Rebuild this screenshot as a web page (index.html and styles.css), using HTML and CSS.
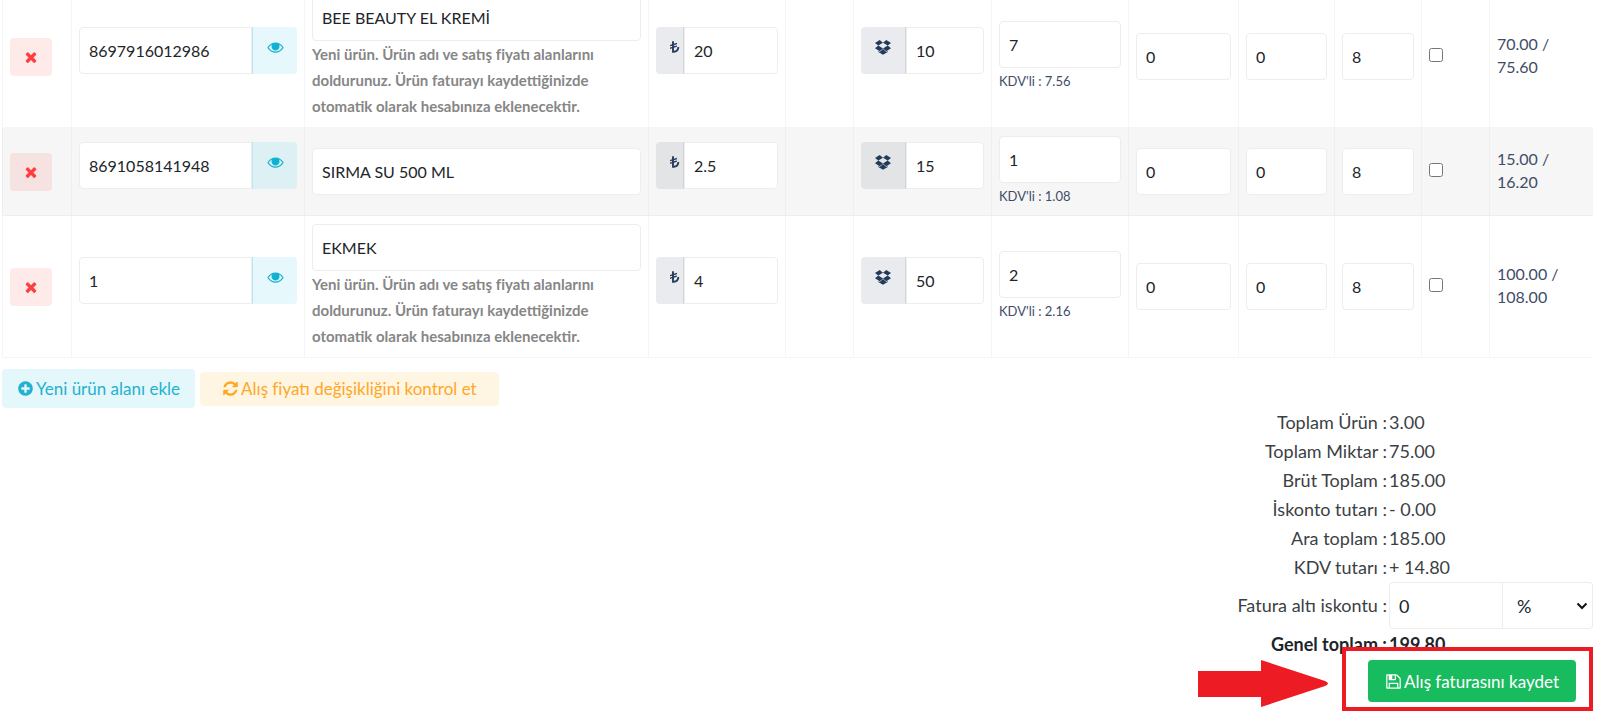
FILE: index.html
```html
<!DOCTYPE html>
<html lang="tr">
<head>
	<meta charset="UTF-8">
	<title>Alış faturası</title>
	<link rel="stylesheet" href="styles.css">
</head>
<body>
	<!-- icons -->
	<svg class="sprite" aria-hidden="true">
		<symbol id="times" viewBox="0 0 1792 1792"><path d="M1490 1322q0 40-28 68l-136 136q-28 28-68 28t-68-28l-294-294-294 294q-28 28-68 28t-68-28l-136-136q-28-28-28-68t28-68l294-294-294-294q-28-28-28-68t28-68l136-136q28-28 68-28t68 28l294 294 294-294q28-28 68-28t68 28l136 136q28 28 28 68t-28 68l-294 294 294 294q28 28 28 68z"/></symbol>
		<symbol id="eye" viewBox="0 0 1792 1792"><path d="M1664 960q-152-236-381-353 61 104 61 225 0 185-131.5 316.5t-316.5 131.5-316.5-131.5-131.5-316.5q0-121 61-225-229 117-381 353 133 205 333.5 326.5t434.5 121.5 434.5-121.5 333.5-326.5zm-720-384q0-20-14-34t-34-14q-125 0-214.5 89.5t-89.5 214.5q0 20 14 34t34 14 34-14 14-34q0-86 61-147t147-61q20 0 34-14t14-34zm848 384q0 34-20 69-140 230-376.5 368.5t-499.5 138.5-499.5-139-376.5-368q-20-35-20-69t20-69q140-229 376.5-368t499.5-139 499.5 139 376.5 368q20 35 20 69z"/><circle cx="896" cy="832" r="330"/></symbol>
		<symbol id="plus" viewBox="0 0 1792 1792"><path d="M1344 960v-128q0-26-19-45t-45-19h-256v-256q0-26-19-45t-45-19h-128q-26 0-45 19t-19 45v256h-256q-26 0-45 19t-19 45v128q0 26 19 45t45 19h256v256q0 26 19 45t45 19h128q26 0 45-19t19-45v-256h256q26 0 45-19t19-45zm320-64q0 209-103 385.5t-279.5 279.5-385.5 103-385.5-103-279.5-279.5-103-385.5 103-385.5 279.5-279.5 385.5-103 385.5 103 279.5 279.5 103 385.5z"/></symbol>
		<symbol id="refresh" viewBox="0 0 1792 1792"><path d="M1639 1056q0 5-1 7-64 268-268 434.5t-478 166.5q-146 0-282.5-55t-243.5-157l-129 129q-19 19-45 19t-45-19-19-45v-448q0-26 19-45t45-19h448q26 0 45 19t19 45-19 45l-137 137q71 66 161 102t187 36q134 0 250-65t186-179q11-17 53-117 8-23 30-23h192q13 0 22.5 9.5t9.5 22.5zm25-800v448q0 26-19 45t-45 19h-448q-26 0-45-19t-19-45 19-45l138-138q-148-137-349-137-134 0-250 65t-186 179q-11 17-53 117-8 23-30 23h-199q-13 0-22.5-9.5t-9.5-22.5v-7q65-268 270-434.5t480-166.5q146 0 284 55.5t245 156.5l130-129q19-19 45-19t45 19 19 45z"/></symbol>
		<symbol id="floppy" viewBox="0 0 1792 1792"><path d="M512 1536h768v-384h-768v384zm896 0h128v-896q0-14-10-38.5t-20-34.5l-281-281q-10-10-34-20t-39-10v416q0 40-28 68t-68 28h-576q-40 0-68-28t-28-68v-416h-128v1280h128v-416q0-40 28-68t68-28h832q40 0 68 28t28 68v416zm-384-928v-320q0-13-9.5-22.5t-22.5-9.5h-192q-13 0-22.5 9.5t-9.5 22.5v320q0 13 9.5 22.5t22.5 9.5h192q13 0 22.5-9.5t9.5-22.5zm640 32v928q0 40-28 68t-68 28h-1344q-40 0-68-28t-28-68v-1344q0-40 28-68t68-28h928q40 0 88 20t76 48l280 280q28 28 48 76t20 88z"/></symbol>
		<symbol id="dropbox" viewBox="0 0 16 16"><path d="M4.7 1 8 3.7 3.3 6.6 0 4zM11.3 1 8 3.7l4.7 2.9L16 4zM0 9.3l3.3-2.7L8 9.5l-3.3 2.8zM16 9.3l-3.3-2.7L8 9.5l3.3 2.8zM8 10.1l3.3 2.8 1.4-.9v1L8 15.8 3.3 13v-1l1.4.9z"/></symbol>
		<symbol id="lira" viewBox="0 0 16 16"><path d="M5 1h2.3v3L11 2.900v1.700L7.300 5.700v1.500L11 6.100v1.700L7.300 8.900V12.700c2.700-.1 4.200-1.700 4.300-4.700h2.200c-.1 4.400-2.600 7-6.800 7H5V9.600l-2.500.8V8.700L5 7.900V6.400l-2.500.8V5.500L5 4.700z"/></symbol>
	</svg>

	<div class="list">
	<table class="products">
		<colgroup>
			<col class="c-del"><col class="c-barcode"><col class="c-name"><col class="c-price">
			<col class="c-empty"><col class="c-stock"><col class="c-cost"><col class="c-disc1">
			<col class="c-disc2"><col class="c-kdv"><col class="c-check"><col class="c-sum">
		</colgroup>
		<tbody>
			<tr>
				<td><button class="del" type="button" aria-label="Sil"><svg><use href="#times"/></svg></button></td>
				<td>
					<div class="group">
						<input class="field" type="text" value="8697916012986" aria-label="Barkod">
						<button class="addon look" type="button" aria-label="Ürünü göster"><svg><use href="#eye"/></svg></button>
					</div>
				</td>
				<td>
					<input class="field" type="text" value="BEE BEAUTY EL KREMİ" aria-label="Ürün adı">
					<p class="help">Yeni ürün. Ürün adı ve satış fiyatı alanlarını doldurunuz. Ürün faturayı kaydettiğinizde otomatik olarak hesabınıza eklenecektir.</p>
				</td>
				<td>
					<div class="group">
						<span class="addon lira"><svg><use href="#lira"/></svg></span>
						<input class="field" type="text" value="20" aria-label="Satış fiyatı">
					</div>
				</td>
				<td></td>
				<td>
					<div class="group">
						<span class="addon"><svg><use href="#dropbox"/></svg></span>
						<input class="field" type="text" value="10" aria-label="Miktar">
					</div>
				</td>
				<td>
					<input class="field" type="text" value="7" aria-label="Alış fiyatı">
					<p class="kdv">KDV'li : 7.56</p>
				</td>
				<td><input class="field" type="text" value="0" aria-label="İskonto 1"></td>
				<td><input class="field" type="text" value="0" aria-label="İskonto 2"></td>
				<td><input class="field" type="text" value="8" aria-label="KDV"></td>
				<td><input class="check" type="checkbox" aria-label="Seç"></td>
				<td class="sum">70.00 /<br>75.60</td>
			</tr>
			<tr class="odd">
				<td><button class="del" type="button" aria-label="Sil"><svg><use href="#times"/></svg></button></td>
				<td>
					<div class="group">
						<input class="field" type="text" value="8691058141948" aria-label="Barkod">
						<button class="addon look" type="button" aria-label="Ürünü göster"><svg><use href="#eye"/></svg></button>
					</div>
				</td>
				<td><input class="field" type="text" value="SIRMA SU 500 ML" aria-label="Ürün adı"></td>
				<td>
					<div class="group">
						<span class="addon lira"><svg><use href="#lira"/></svg></span>
						<input class="field" type="text" value="2.5" aria-label="Satış fiyatı">
					</div>
				</td>
				<td></td>
				<td>
					<div class="group">
						<span class="addon"><svg><use href="#dropbox"/></svg></span>
						<input class="field" type="text" value="15" aria-label="Miktar">
					</div>
				</td>
				<td>
					<input class="field" type="text" value="1" aria-label="Alış fiyatı">
					<p class="kdv">KDV'li : 1.08</p>
				</td>
				<td><input class="field" type="text" value="0" aria-label="İskonto 1"></td>
				<td><input class="field" type="text" value="0" aria-label="İskonto 2"></td>
				<td><input class="field" type="text" value="8" aria-label="KDV"></td>
				<td><input class="check" type="checkbox" aria-label="Seç"></td>
				<td class="sum">15.00 /<br>16.20</td>
			</tr>
			<tr>
				<td><button class="del" type="button" aria-label="Sil"><svg><use href="#times"/></svg></button></td>
				<td>
					<div class="group">
						<input class="field" type="text" value="1" aria-label="Barkod">
						<button class="addon look" type="button" aria-label="Ürünü göster"><svg><use href="#eye"/></svg></button>
					</div>
				</td>
				<td>
					<input class="field" type="text" value="EKMEK" aria-label="Ürün adı">
					<p class="help">Yeni ürün. Ürün adı ve satış fiyatı alanlarını doldurunuz. Ürün faturayı kaydettiğinizde otomatik olarak hesabınıza eklenecektir.</p>
				</td>
				<td>
					<div class="group">
						<span class="addon lira"><svg><use href="#lira"/></svg></span>
						<input class="field" type="text" value="4" aria-label="Satış fiyatı">
					</div>
				</td>
				<td></td>
				<td>
					<div class="group">
						<span class="addon"><svg><use href="#dropbox"/></svg></span>
						<input class="field" type="text" value="50" aria-label="Miktar">
					</div>
				</td>
				<td>
					<input class="field" type="text" value="2" aria-label="Alış fiyatı">
					<p class="kdv">KDV'li : 2.16</p>
				</td>
				<td><input class="field" type="text" value="0" aria-label="İskonto 1"></td>
				<td><input class="field" type="text" value="0" aria-label="İskonto 2"></td>
				<td><input class="field" type="text" value="8" aria-label="KDV"></td>
				<td><input class="check" type="checkbox" aria-label="Seç"></td>
				<td class="sum">100.00 /<br>108.00</td>
			</tr>
		</tbody>
	</table>
	</div>

	<div class="actions">
		<button class="btn btn-info" type="button"><svg><use href="#plus"/></svg>Yeni ürün alanı ekle</button>
		<button class="btn btn-warning" type="button"><svg><use href="#refresh"/></svg>Alış fiyatı değişikliğini kontrol et</button>
	</div>

	<dl class="totals">
		<dt>Toplam Ürün :</dt><dd>3.00</dd>
		<dt>Toplam Miktar :</dt><dd>75.00</dd>
		<dt>Brüt Toplam :</dt><dd>185.00</dd>
		<dt>İskonto tutarı :</dt><dd>- 0.00</dd>
		<dt>Ara toplam :</dt><dd>185.00</dd>
		<dt>KDV tutarı :</dt><dd>+ 14.80</dd>
		<dt><label for="discount">Fatura altı iskontu :</label></dt>
		<dd class="discount">
			<input class="field" id="discount" type="text" value="0">
			<span class="select">
				<select class="field" aria-label="İskonto türü"><option>%</option><option>₺</option></select>
				<svg viewBox="0 0 12 8"><path d="M1.500 1.500 6 6l4.500-4.500"/></svg>
			</span>
		</dd>
		<dt class="grand">Genel toplam :</dt><dd class="grand">199.80</dd>
	</dl>

	<div class="save">
		<button class="btn btn-success" type="submit"><svg><use href="#floppy"/></svg>Alış faturasını kaydet</button>
		<span class="frame"></span>
		<svg class="arrow" viewBox="0 0 130 47"><path d="M0 11h63V0l64 21q6 2.500 0 5L63 47V37H0z"/></svg>
	</div>
</body>
</html>
```
FILE: styles.css
```css
*{margin:0;padding:0;box-sizing:border-box;}
body{
	padding:0 7px 0 2px;
	font-family:Lato,"Open Sans",sans-serif;
	font-size:16px;
	line-height:23px;
	color:#3f4d67;
	background:#fff;
}
button,input,select{
	font-family:inherit;
	font-size:16px;
	color:#212529;
}
button{
	border:0;
	cursor:pointer;
}
svg{
	width:16px;
	height:16px;
	fill:currentColor;
}
.sprite{
	display:none;
}

/* product rows, the list is scrolled a little */
.list{
	overflow:hidden;
}
.products{
	width:100%;
	margin-top:-15px;
	table-layout:fixed;
	border-collapse:collapse;
}
.products td{
	padding:8px 7px;
	border:1px solid #f5f5f5;
	vertical-align:middle;
}
.products .odd td{
	border-color:#eee;
}
.odd{
	background:#f6f6f6;
}
.c-del{width:69px;}
.c-barcode{width:233px;}
.c-name{width:344px;}
.c-price{width:137px;}
.c-empty{width:68px;}
.c-stock{width:138px;}
.c-cost{width:137px;}
.c-disc1{width:110px;}
.c-disc2{width:96px;}
.c-kdv{width:87px;}
.c-check{width:68px;}
.c-sum{width:104px;}

.field{
	display:block;
	width:100%;
	height:47px;
	padding:0 9px;
	border:1px solid #ededed;
	border-radius:4px;
	background:#fff;
}
.group{
	display:flex;
	margin-bottom:12px;
}
.group .field{
	flex:1;
	min-width:0;
	border-radius:0 4px 4px 0;
}
.group .field:first-child{
	border-radius:4px 0 0 4px;
}
.addon{
	display:flex;
	flex:none;
	justify-content:center;
	width:45px;
	height:47px;
	padding-top:12px;
	border-right:1px solid #d3d5d9;
	border-radius:4px 0 0 4px;
	background:rgba(36,58,90,.1);
	color:#243a5a;
}
.odd .addon{
	background:#e2e4e5;
}
.lira{
	justify-content:flex-end;
	width:28px;
	padding-right:2px;
}
.lira svg{
	width:13px;
}
.look{
	border:0;
	border-left:1px solid #bfe6ec;
	border-radius:0 4px 4px 0;
	background:#e6f8fb;
	color:#0fb2d0;
}
.odd .look{
	background:#ddf0f3;
}
.look svg{
	width:17px;
}
.del{
	display:block;
	width:42px;
	height:38px;
	padding-top:4px;
	border-radius:4px;
	background:rgba(255,62,62,.11);
	color:#ff3f3f;
}
.help{
	font-size:15px;
	font-weight:bold;
	line-height:26px;
	color:#868686;
}
.kdv{
	padding-top:3px;
	font-size:13px;
	line-height:21px;
}
.check{
	display:block;
	width:14px;
	height:14px;
	margin-bottom:4px;
}
.products .sum{
	padding-bottom:12px;
}

.actions{
	display:flex;
	align-items:center;
	gap:5px;
	margin-top:11px;
}
.btn{
	display:flex;
	align-items:center;
	justify-content:center;
	gap:2px;
	padding:0 15px;
	border-radius:4px;
	font-size:17px;
}
.btn svg{
	width:17px;
	height:17px;
}
.btn-info{
	height:39px;
	background:#e4f7fa;
	color:#23b2d0;
}
.btn-warning{
	height:34px;
	padding:0 22px;
	background:#fff5e3;
	color:#ffa726;
}

.totals{
	display:grid;
	grid-template-columns:1fr 204px;
	column-gap:2px;
	align-items:center;
	font-size:18px;
	line-height:29px;
	color:#3c3f45;
}
.totals dt{
	text-align:right;
}
.totals .field{
	font-size:18px;
}
.discount{
	display:flex;
}
.discount .field{
	border-radius:4px 0 0 4px;
}
.select{
	position:relative;
	flex:none;
	width:90px;
}
.discount select.field{
	padding:0 14px;
	border-left-width:0;
	border-radius:0 4px 4px 0;
	appearance:none;
}
.select svg{
	position:absolute;
	top:20px;
	right:5px;
	width:12px;
	height:8px;
	fill:none;
	stroke:#111;
	stroke-width:2;
	pointer-events:none;
}
.totals .grand{
	font-weight:bold;
	line-height:31px;
	color:#212529;
}

.save{
	position:relative;
	width:251px;
	margin-left:auto;
	padding:0 17px 11px 0;
}
.btn-success{
	height:42px;
	margin-left:auto;
	padding:0 17px;
	background:#19bb5f;
	color:#fff;
}
/* red marks over the save button */
.frame{
	position:absolute;
	top:-13px;
	left:0;
	width:251px;
	height:64px;
	border:4px solid #ed1c24;
	pointer-events:none;
}
.arrow{
	position:absolute;
	top:0;
	right:265px;
	width:130px;
	height:47px;
	fill:#ed1c24;
}
```
